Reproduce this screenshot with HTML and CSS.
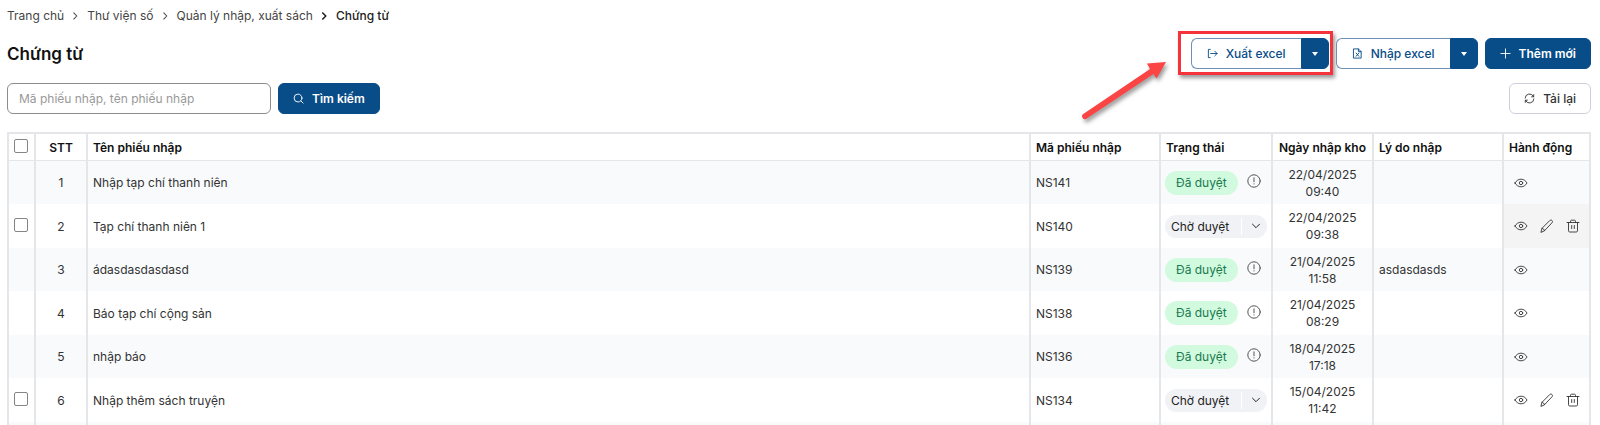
FILE: index.html
```
<!DOCTYPE html>
<html lang="vi">
<head>
    <meta charset="UTF-8" />
    <meta name="viewport" content="width=device-width, initial-scale=1.0" />
    <title>Chứng từ</title>
    <link rel="stylesheet" href="styles.css">
</head>
<body>
    <svg class="sprite" aria-hidden="true">
        <symbol id="chevron-right" viewBox="0 0 8 10"><path d="M2 1.500 5.500 5 2 8.500"/></symbol>
        <symbol id="chevron-down" viewBox="0 0 10 10"><path d="M1.500 3.200 5 6.700 8.500 3.200"/></symbol>
        <symbol id="eye" viewBox="0 0 14 14"><path d="M1 7c1.300-2.400 3.500-3.800 6-3.800S11.700 4.600 13 7c-1.300 2.400-3.500 3.800-6 3.800S2.300 9.400 1 7z"/><circle cx="7" cy="7" r="1.700"/></symbol>
        <symbol id="pencil" viewBox="0 0 14 14"><path d="M1 13l1-3.700 7.600-7.600c.7-.7 1.700-.9 2.400-.2s.6 1.700-.1 2.400L4.500 11.700zM2 9.300c1.300.2 2.200 1.100 2.500 2.400"/></symbol>
        <symbol id="trash" viewBox="0 0 14 14"><path d="M1 3.500h12M2.500 3.500v8.300c0 .7.5 1.200 1.200 1.200h6.600c.7 0 1.200-.5 1.200-1.200V3.500M4.500 3.500V2.200c0-.6.4-1 1-1h3c.6 0 1 .4 1 1v1.300M5.700 6.500v3M8.300 6.500v3"/></symbol>
        <symbol id="info" viewBox="0 0 14 14"><circle cx="7" cy="7" r="6.200"/><path d="M7 3.800v4M7 9.800v.2"/></symbol>
    </svg>

    <nav class="breadcrumb" aria-label="Breadcrumb">
        <a href="#">Trang chủ</a>
        <svg class="sep"><use href="#chevron-right"/></svg>
        <a href="#">Thư viện số</a>
        <svg class="sep"><use href="#chevron-right"/></svg>
        <a href="#">Quản lý nhập, xuất sách</a>
        <svg class="sep sep-current"><use href="#chevron-right"/></svg>
        <span class="current">Chứng từ</span>
    </nav>

    <header class="page-head">
        <h1>Chứng từ</h1>
        <div class="actions">
            <div class="split">
                <button type="button" class="btn split-main">
                    <svg class="icon" viewBox="0 0 12 12"><path d="M3.500 1.500H1.500v9h2M4 6h7M8.500 3.500 11 6 8.500 8.500"/></svg>
                    Xuất excel
                </button>
                <button type="button" class="btn split-toggle" aria-label="Tùy chọn xuất"><span class="caret"></span></button>
                <span class="callout-box"></span>
                <svg class="callout-arrow" viewBox="0 0 96 70"><path d="M2.500 62.500 70 17 67 11.500 86 10 76.500 26.500 73.500 22 6 67A3 3 0 0 1 2.500 62.500z"/></svg>
            </div>
            <div class="split">
                <button type="button" class="btn split-main">
                    <svg class="icon" viewBox="0 0 12 12"><path d="M2 1h5l3 3v7H2zM7 1v3h3M4.500 5.500l3 3.500M7.500 5.500l-3 3.500"/></svg>
                    Nhập excel
                </button>
                <button type="button" class="btn split-toggle" aria-label="Tùy chọn nhập"><span class="caret"></span></button>
            </div>
            <button type="button" class="btn primary">
                <svg class="icon" viewBox="0 0 12 12"><path d="M6 1v10M1 6h10"/></svg>
                Thêm mới
            </button>
        </div>
    </header>

    <div class="toolbar">
        <form class="search">
            <input type="text" class="search-input" placeholder="Mã phiếu nhập, tên phiếu nhập" aria-label="Mã phiếu nhập, tên phiếu nhập" />
            <button type="button" class="btn primary">
                <svg class="icon" viewBox="0 0 12 12"><circle cx="5.500" cy="5.500" r="4.300"/><path d="M8.600 8.600 11 11"/></svg>
                Tìm kiếm
            </button>
        </form>
        <button type="button" class="btn reload">
            <svg class="icon" viewBox="0 0 12 12"><path d="M1.200 5.500A4.800 4.800 0 0 1 10.400 4M10.800 6.500A4.800 4.800 0 0 1 1.600 8M10.600 1.800V4.200H8.300M1.400 10.200V7.800h2.300"/></svg>
            Tải lại
        </button>
    </div>

    <table class="grid">
        <colgroup>
            <col class="col-check"><col class="col-stt"><col><col class="col-code">
            <col class="col-status"><col class="col-date"><col class="col-reason"><col class="col-action">
        </colgroup>
        <thead>
            <tr>
                <th><input type="checkbox" aria-label="Chọn tất cả"></th>
                <th class="center">STT</th>
                <th>Tên phiếu nhập</th>
                <th>Mã phiếu nhập</th>
                <th>Trạng thái</th>
                <th class="center">Ngày nhập kho</th>
                <th>Lý do nhập</th>
                <th>Hành động</th>
            </tr>
        </thead>
        <tbody>
            <tr>
                <td></td>
                <td class="center">1</td>
                <td>Nhập tạp chí thanh niên</td>
                <td>NS141</td>
                <td><div class="status"><span class="badge">Đã duyệt</span><svg class="info"><use href="#info"/></svg></div></td>
                <td class="center">22/04/2025<br>09:40</td>
                <td></td>
                <td><div class="row-actions"><button type="button" aria-label="Xem"><svg><use href="#eye"/></svg></button></div></td>
            </tr>
            <tr>
                <td><input type="checkbox" aria-label="Chọn NS140"></td>
                <td class="center">2</td>
                <td>Tạp chí thanh niên 1</td>
                <td>NS140</td>
                <td><div class="pick"><select aria-label="Trạng thái NS140"><option>Chờ duyệt</option><option>Đã duyệt</option></select><svg><use href="#chevron-down"/></svg></div></td>
                <td class="center">22/04/2025<br>09:38</td>
                <td></td>
                <td class="active"><div class="row-actions">
                    <button type="button" aria-label="Xem"><svg><use href="#eye"/></svg></button>
                    <button type="button" aria-label="Sửa"><svg><use href="#pencil"/></svg></button>
                    <button type="button" aria-label="Xóa"><svg><use href="#trash"/></svg></button>
                </div></td>
            </tr>
            <tr>
                <td></td>
                <td class="center">3</td>
                <td>ádasdasdasdasd</td>
                <td>NS139</td>
                <td><div class="status"><span class="badge">Đã duyệt</span><svg class="info"><use href="#info"/></svg></div></td>
                <td class="center">21/04/2025<br>11:58</td>
                <td>asdasdasds</td>
                <td><div class="row-actions"><button type="button" aria-label="Xem"><svg><use href="#eye"/></svg></button></div></td>
            </tr>
            <tr>
                <td></td>
                <td class="center">4</td>
                <td>Báo tạp chí cộng sản</td>
                <td>NS138</td>
                <td><div class="status"><span class="badge">Đã duyệt</span><svg class="info"><use href="#info"/></svg></div></td>
                <td class="center">21/04/2025<br>08:29</td>
                <td></td>
                <td><div class="row-actions"><button type="button" aria-label="Xem"><svg><use href="#eye"/></svg></button></div></td>
            </tr>
            <tr>
                <td></td>
                <td class="center">5</td>
                <td>nhập báo</td>
                <td>NS136</td>
                <td><div class="status"><span class="badge">Đã duyệt</span><svg class="info"><use href="#info"/></svg></div></td>
                <td class="center">18/04/2025<br>17:18</td>
                <td></td>
                <td><div class="row-actions"><button type="button" aria-label="Xem"><svg><use href="#eye"/></svg></button></div></td>
            </tr>
            <tr>
                <td><input type="checkbox" aria-label="Chọn NS134"></td>
                <td class="center">6</td>
                <td>Nhập thêm sách truyện</td>
                <td>NS134</td>
                <td><div class="pick"><select aria-label="Trạng thái NS134"><option>Chờ duyệt</option><option>Đã duyệt</option></select><svg><use href="#chevron-down"/></svg></div></td>
                <td class="center">15/04/2025<br>11:42</td>
                <td></td>
                <td><div class="row-actions">
                    <button type="button" aria-label="Xem"><svg><use href="#eye"/></svg></button>
                    <button type="button" aria-label="Sửa"><svg><use href="#pencil"/></svg></button>
                    <button type="button" aria-label="Xóa"><svg><use href="#trash"/></svg></button>
                </div></td>
            </tr>
            <tr class="spacer"><td></td><td></td><td></td><td></td><td></td><td></td><td></td><td></td></tr>
        </tbody>
    </table>
</body>
</html>
```
FILE: styles.css
```
* { box-sizing: border-box; margin: 0; padding: 0; }
body {
    font-family: Inter, "Noto Sans", sans-serif;
    font-size: 12px;
    line-height: 17px;
    color: #333;
    background: #fff;
    padding: 7px 9px 0 7px;
}
button, input, select { font: inherit; color: inherit; }
button { cursor: pointer; }
svg {
    fill: none;
    stroke: currentColor;
    stroke-linecap: round;
    stroke-linejoin: round;
}
.sprite { display: none; }

/* Breadcrumb */
.breadcrumb {
    display: flex;
    align-items: center;
    gap: 8px;
    color: #444;
}
.breadcrumb a { color: inherit; text-decoration: none; }
.sep { width: 7px; height: 10px; stroke-width: 1.2; }
.sep-current { stroke-width: 1.8; color: #222; }
.current { font-weight: 500; color: #222; }

/* Title and main actions */
.page-head {
    display: flex;
    justify-content: space-between;
    align-items: center;
    margin-top: 14px;
}
h1 {
    font-size: 17px;
    line-height: 24px;
    font-weight: 600;
    color: #111;
}
.actions { display: flex; gap: 7px; }
.btn {
    display: flex;
    align-items: center;
    justify-content: center;
    gap: 8px;
    height: 31px;
    padding: 0 14px;
    border: 1px solid #084c88;
    border-radius: 6px;
    background: #fff;
    color: #084c88;
    white-space: nowrap;
}
.icon { width: 11px; height: 11px; }
.primary {
    background: #084c88;
    color: #fff;
    font-weight: 600;
}
.split { display: flex; position: relative; }
.split-main {
    padding: 0 15px;
    border-color: #6f8fb5;
    border-right: none;
    border-radius: 6px 0 0 6px;
    font-weight: 500;
}
.split-toggle {
    width: 28px;
    padding: 0;
    border-radius: 0 6px 6px 0;
    background: #084c88;
}
.caret {
    border: 3px solid transparent;
    border-top: 4px solid #fff;
    border-bottom: none;
}

/* Callout over the export button */
.callout-box {
    position: absolute;
    inset: -7px -4px -6px -13px;
    border: 3px solid #f5333a;
    box-shadow: 2px 3px 4px rgba(0,0,0,0.4);
    pointer-events: none;
}
.callout-arrow {
    position: absolute;
    right: 153px;
    top: 14px;
    width: 96px;
    height: 70px;
    fill: #fb4444;
    stroke: none;
    filter: drop-shadow(2px 3px 2px rgba(0,0,0,0.4));
    pointer-events: none;
}

/* Search row */
.toolbar {
    display: flex;
    justify-content: space-between;
    margin: 14px 0 18px;
}
.search { display: flex; gap: 7px; }
.search-input {
    width: 264px;
    height: 31px;
    padding: 0 11px;
    border: 1px solid #8c8c8c;
    border-radius: 6px;
    outline: none;
}
.search-input::placeholder { color: #999; }
.reload { border-color: #cdd0dc; color: #333; font-weight: 500; }

/* Table */
.grid {
    width: 100%;
    table-layout: fixed;
    border-spacing: 0;
    border-top: 2px solid #e5e6ea;
    border-left: 2px solid #e5e6ea;
}
.col-check { width: 27px; }
.col-stt { width: 52px; }
.col-code { width: 130px; }
.col-status { width: 112px; }
.col-date { width: 101px; }
.col-reason { width: 130px; }
.col-action { width: 87px; }
.grid th, .grid td {
    height: 44px;
    padding: 0 5px;
    border-right: 2px solid #e5e6ea;
    text-align: left;
    vertical-align: middle;
}
.grid th {
    height: 27px;
    border-bottom: 1px solid #e5e6ea;
    font-weight: 600;
    color: #111;
    white-space: nowrap;
}
.grid tbody tr:nth-child(odd) td { height: 43px; background: #f8fafc; }
.grid tbody .spacer td { height: 3px; }
.grid .center { text-align: center; }
.grid .active { background: #f4f4f4; }
.grid input[type="checkbox"] {
    appearance: none;
    display: block;
    width: 14px;
    height: 14px;
    margin-bottom: 2px;
    border: 1px solid #858585;
    border-radius: 2px;
    background: #fff;
}

.status { display: flex; align-items: center; gap: 9px; }
.badge {
    padding: 4px 11px;
    margin-left: -1px;
    border-radius: 12px;
    background: #d1fadf;
    color: #19794f;
    line-height: 16px;
}
.info { width: 14px; height: 14px; margin-bottom: 3px; color: #555; }
.pick {
    display: flex;
    align-items: center;
    width: 102px;
    height: 23px;
    margin-left: -1px;
    border-radius: 12px;
    background: #f1f2f6;
    color: #222;
}
.pick select {
    appearance: none;
    width: 77px;
    height: 17px;
    padding-left: 6px;
    border: none;
    border-right: 1px solid #fff;
    background: none;
    outline: none;
}
.pick svg { width: 10px; height: 10px; margin-left: 9px; }

.row-actions { display: flex; gap: 12px; padding-left: 5px; }
.row-actions button { border: none; background: none; }
.row-actions svg { display: block; width: 14px; height: 14px; stroke-width: 0.9; }
```
